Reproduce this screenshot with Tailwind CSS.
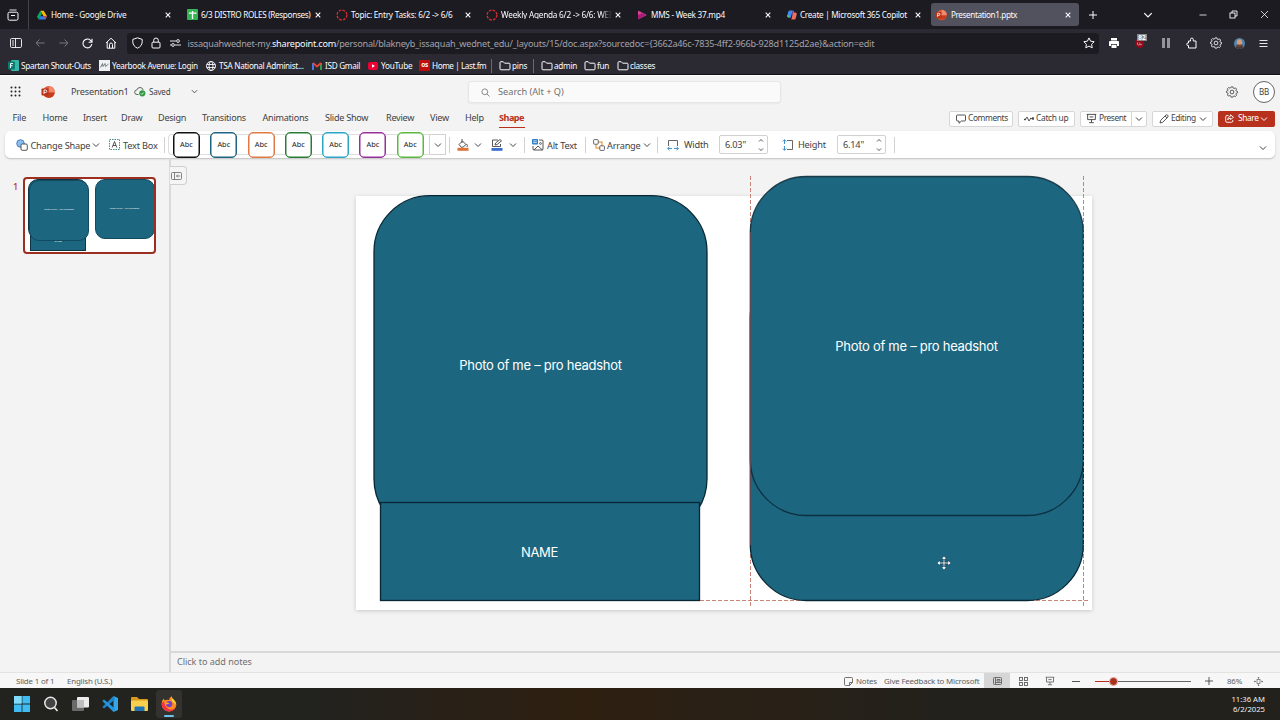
<!DOCTYPE html>
<html lang="en">
<head>
    <meta charset="UTF-8">
    <meta name="viewport" content="width=device-width, initial-scale=1.0">
    <title>Presentation1.pptx</title>
    <script src="https://cdn.jsdelivr.net/npm/@tailwindcss/browser@4"></script>
</head>
<body class="w-[1280px] h-[720px] overflow-hidden flex flex-col bg-[#f3f3f3] font-['Noto_Sans','Open_Sans',sans-serif] leading-none whitespace-nowrap">

    <!-- Shared icons -->
    <svg class="hidden">
        <symbol id="x" viewBox="0 0 8 8"><path d="M1.7 1.7l4.6 4.6M6.3 1.7L1.7 6.3" stroke="currentColor" stroke-width="1.1" fill="none"/></symbol>
        <symbol id="chev" viewBox="0 0 8 8"><path d="M1 2.5l3 3 3-3" stroke="currentColor" stroke-width="1" fill="none"/></symbol>
        <symbol id="folder" viewBox="0 0 12 12"><path d="M1 2.6q0-.9.9-.9h2.3l1.4 1.5h4.5q.9 0 .9.9v4.8q0 .9-.9.9H1.9q-.9 0-.9-.9z" stroke="currentColor" fill="none"/></symbol>
        <symbol id="ring" viewBox="0 0 12 12"><circle cx="6" cy="6" r="4.9" fill="none" stroke="#d8302f" stroke-width="1.3" stroke-dasharray="2.6 1.25"/></symbol>
        <symbol id="ppt" viewBox="0 0 14 14"><circle cx="7.8" cy="7" r="6" fill="#e2583a"/><path d="M7.8 1a6 6 0 0 1 6 6h-6z" fill="#f08a6c"/><path d="M2 8h11.7a6 6 0 0 1-11.7 0z" fill="#c43e1c"/><rect x="0.5" y="3.5" width="7" height="7" rx="0.8" fill="#b7341b"/><path d="M3 9V5h1.5a1.2 1.2 0 0 1 0 2.5H3" fill="none" stroke="#fff" stroke-width="0.9"/></symbol>
        <symbol id="gear" viewBox="0 0 14 14"><path d="M6 1h2l.5 1.500 1 .4 1.500-.7 1.300 1.400-.7 1.500.4.900 1.500.5v1.500l-1.500.5-.4 1 .7 1.500-1.300 1.300-1.500-.7-1 .4L8 13H6l-.5-1.500-1-.4-1.500.7-1.300-1.300.7-1.500-.4-1L.5 7.500V6l1.500-.5.4-.9-.7-1.500L3 1.800l1.500.7 1-.4z" fill="none" stroke="currentColor" stroke-linejoin="round"/><circle cx="7" cy="7" r="2.200" fill="none" stroke="currentColor"/></symbol>
        <symbol id="screen" viewBox="0 0 12 12"><path d="M.8 1.500h10.400M1.800 1.500v5.700h8.400V1.500M6 7.200v3M3.500 10.500h5M4 4.300h4" fill="none" stroke="currentColor"/></symbol>
        <symbol id="spin" viewBox="0 0 8 16"><path d="M2 4.500l2-2 2 2M2 11.500l2 2 2-2" fill="none" stroke="currentColor" stroke-width="0.9"/></symbol>
    </svg>

    <!-- Tab strip -->
    <div class="h-[29px] shrink-0 bg-[#1c1b22] flex items-center text-[#fbfbfe] text-[8.2px] tracking-[-0.26px]">
        <div class="w-[29px] h-full border-r border-[#45444c] flex items-center pl-[7px]">
            <svg class="size-3" viewBox="0 0 12 12" fill="none" stroke="currentColor"><path d="M2.500 1h7" stroke-width="0.9"/><rect x="1" y="3.200" width="10" height="8" rx="1.500"/><path d="M4 6.500h4"/></svg>
        </div>
        <div class="w-[150px] flex items-center pl-2">
            <svg class="w-[10px] h-[10px]" viewBox="0 0 12 12"><path d="M4 1h4l4 6.500H8z" fill="#ffba00"/><path d="M4 1l2 3.500L2 11.500 0 8z" fill="#0da960"/><path d="M2 11.500l2-4h8l-2 4z" fill="#2f7ef0"/><path d="M10 11.500l2-4H8z" fill="#ea4335"/></svg>
            <span class="ml-1 pt-px w-[112px]">Home - Google Drive</span><svg class="size-2 ml-[1px]"><use href="#x"/></svg>
        </div>
        <div class="w-[150px] flex items-center pl-2">
            <svg class="w-[11px] h-[11px]" viewBox="0 0 11 11"><rect width="11" height="11" rx="1" fill="#34b455"/><path d="M5.500 2v8M2 4.200h7.500" stroke="#fff" stroke-width="1.300"/></svg>
            <span class="ml-[3px] pt-px w-[111px] tracking-[-0.34px]">6/3 DISTRO ROLES (Responses)</span><svg class="size-2 ml-[2px]"><use href="#x"/></svg>
        </div>
        <div class="w-[150px] flex items-center pl-[7px]">
            <svg class="size-3"><use href="#ring"/></svg>
            <span class="ml-[3px] pt-px w-[111px] tracking-[-0.22px]">Topic: Entry Tasks: 6/2 -&gt; 6/6</span><svg class="size-2 ml-[2px]"><use href="#x"/></svg>
        </div>
        <div class="w-[150px] flex items-center pl-[7px]">
            <svg class="size-3"><use href="#ring"/></svg>
            <span class="ml-[3px] pt-px w-[111px] mask-r-from-90% tracking-[-0.22px]">Weekly Agenda 6/2 -&gt; 6/6: WEE</span><svg class="size-2 ml-[2px]"><use href="#x"/></svg>
        </div>
        <div class="w-[150px] flex items-center pl-2">
            <svg class="w-[10px] h-[10px]" viewBox="0 0 10 10"><path d="M1 1.500q0-1 1-.6l7 3.500q.9.600 0 1.200l-7 3.500q-1 .4-1-.6z" fill="#e0409a"/><path d="M1 5l4-2 4 2-7 4q-1 .4-1-.6z" fill="#a91c78"/></svg>
            <span class="ml-1 pt-px w-[111px]">MMS - Week 37.mp4</span><svg class="size-2 ml-[2px]"><use href="#x"/></svg>
        </div>
        <div class="w-[150px] flex items-center pl-[8px]">
            <svg class="w-[10px] h-[10px]" viewBox="0 0 10 10"><path d="M2.500.5h3.200L3.800 7.500H1.500Q0 7.500.3 5.500L1.200 2Q1.500.5 2.500.5z" fill="#3a8df0"/><path d="M1 4.500l2 3H1.500Q0 7.500.3 5.500z" fill="#5ec26a"/><path d="M7.500 9.500H4.300L6.200 2.500h2.300Q10 2.500 9.700 4.500L8.800 8Q8.500 9.500 7.500 9.500z" fill="#ef6f5a"/><path d="M5.700.5Q7 .5 7.300 2.500H6.200L4.900 7z" fill="#b35be0"/></svg>
            <span class="ml-[3px] pt-px w-[112px] tracking-[-0.3px]">Create | Microsoft 365 Copilot</span><svg class="size-2 ml-[2px]"><use href="#x"/></svg>
        </div>
        <div class="ml-[2px] w-[148px] h-[23px] rounded-[3px] bg-[#52525e] flex items-center pl-[4px]">
            <svg class="size-3"><use href="#ppt"/></svg>
            <span class="ml-1 pt-px w-[111px] tracking-[-0.4px]">Presentation1.pptx</span><svg class="size-2 ml-[2px]"><use href="#x"/></svg>
        </div>
        <svg class="size-[10px] ml-[9px]" viewBox="0 0 10 10"><path d="M5 1v8M1 5h8" stroke="currentColor"/></svg>
        <svg class="size-[10px] ml-[45px]"><use href="#chev"/></svg>
        <svg class="size-[8px] ml-[46px]" viewBox="0 0 8 8"><path d="M.5 4h7" stroke="currentColor" stroke-width="0.8"/></svg>
        <svg class="size-[9px] ml-[22px]" viewBox="0 0 9 9" fill="none" stroke="currentColor" stroke-width="0.9"><rect x="1" y="3" width="5" height="5"/><path d="M3 3V1h5v5H6"/></svg>
        <svg class="size-[9px] ml-[22px]" viewBox="0 0 9 9"><path d="M1 1l7 7M8 1L1 8" stroke="currentColor" stroke-width="0.8"/></svg>
    </div>

    <!-- Address bar -->
    <div class="h-[27px] pt-px shrink-0 bg-[#2b2a33] flex items-center text-[#fbfbfe]">
        <svg class="w-3 h-[10px] ml-[10px]" viewBox="0 0 12 10" fill="none" stroke="currentColor" stroke-width="0.9"><rect x="0.500" y="0.500" width="11" height="9" rx="1.200"/><path d="M5.500.5v9M2 3h2M2 5h2M2 7h2"/></svg>
        <svg class="size-[10px] ml-[13px] text-[#77767f]" viewBox="0 0 10 10" fill="none" stroke="currentColor"><path d="M9.500 5H1M4.500 1.500L1 5l3.500 3.500"/></svg>
        <svg class="size-[10px] ml-[14px] text-[#77767f]" viewBox="0 0 10 10" fill="none" stroke="currentColor"><path d="M.5 5H9M5.500 1.500L9 5 5.500 8.500"/></svg>
        <svg class="size-[11px] ml-[13px]" viewBox="0 0 11 11" fill="none" stroke="currentColor" stroke-width="1.100"><path d="M9.800 6A4.400 4.400 0 1 1 8.500 2.300L9.800 3.800M10 .8v3.400H6.600"/></svg>
        <svg class="size-[12px] ml-[12px]" viewBox="0 0 12 12" fill="none" stroke="currentColor"><path d="M1 6l5-4.800L11 6M2.200 5v6.200h7.600V5M4.500 11V7.500a1.500 1.500 0 0 1 3 0V11"/></svg>
        <div class="ml-[10px] w-[972px] h-[21px] bg-[#1c1b22] rounded-[3px] flex items-center">
            <svg class="w-[11px] h-3 ml-[5px]" viewBox="0 0 11 12" fill="none" stroke="currentColor"><path d="M5.500.8l4.700 1.600v2.400c0 3-1.700 5-4.700 6.400C2.500 9.800.8 7.800.8 4.800V2.400z"/></svg>
            <svg class="w-[10px] h-3 ml-2" viewBox="0 0 10 12" fill="none" stroke="currentColor"><rect x="1" y="5.200" width="8" height="5.800" rx="1"/><path d="M2.700 5V3.300a2.300 2.300 0 0 1 4.600 0V5"/></svg>
            <svg class="w-[11px] h-[8px] ml-[9px]" viewBox="0 0 11 8" fill="none" stroke="currentColor" stroke-width="0.9"><path d="M0 2h6M5 6h6M0 6h1"/><circle cx="8" cy="2" r="1.400"/><circle cx="3" cy="6" r="1.400"/></svg>
            <span class="ml-[6.500px] pt-px w-[889.500px] text-[9.100px] tracking-[-0.205px] text-[#a3a3ab]">issaquahwednet-my.<span class="text-[#fbfbfe]">sharepoint.com</span>/personal/blakneyb_issaquah_wednet_edu/_layouts/15/doc.aspx?sourcedoc={3662a46c-7835-4ff2-966b-928d1125d2ae}&amp;action=edit</span>
            <svg class="size-[12px] ml-[6px]" viewBox="0 0 12 12" fill="none" stroke="currentColor" stroke-linejoin="round"><path d="M6 .9l1.600 3.300 3.600.5-2.600 2.500.6 3.600L6 9.100l-3.200 1.700.6-3.600L.8 4.700l3.600-.5z"/></svg>
        </div>
        <svg class="size-[12px] ml-[9px]" viewBox="0 0 12 12"><path d="M3 1h6v2.500H3zM1 5q0-1 1-1h8q1 0 1 1v4H9V7H3v2H1zM3.500 7.800h5V11h-5z" fill="#fff"/></svg>
        <div class="relative ml-[14px] w-[13px] h-3">
            <svg class="size-[12px]" viewBox="0 0 12 12"><path d="M6 1.500l4 2V8q-1 3-4 3.500Q3 11 1.500 8V3z" fill="#8e0a18"/><path d="M3.500 5.500v2q1.200 1.200 2.400 0v-2M5.900 7.500q1.500 1 2.200-.5" stroke="#e8b8bc" stroke-width="0.700" fill="none"/></svg>
            <span class="absolute left-[3px] -top-[3px] w-[10px] h-[7px] bg-[#8a8a8a] text-white text-[6.500px] leading-[7px] text-center font-bold">82</span>
        </div>
        <svg class="size-[10px] ml-[14px]" viewBox="0 0 10 10"><path d="M1 0h3v10H1zM6 0h3v10H6z" fill="#94949a"/></svg>
        <svg class="size-[12px] ml-[15px]" viewBox="0 0 12 12" fill="none" stroke="currentColor"><path d="M2.500 4h2V2.500a1.400 1.400 0 0 1 2.800 0V4H10v7H2.500V8.500H2A1.200 1.200 0 0 1 2 6h.5z"/></svg>
        <svg class="size-[12px] ml-[12px]"><use href="#gear"/></svg>
        <svg class="size-[11px] ml-[12px]" viewBox="0 0 11 11"><circle cx="5.500" cy="5.500" r="5.500" fill="#4b86a8"/><path d="M2 9.500q3.500 3 7 0L8.500 7h-6z" fill="#4a3530"/><ellipse cx="5.500" cy="4.800" rx="2.700" ry="3.600" fill="#d69a80"/><path d="M3 6q2.500 1.500 5 0Q7.500 9 5.500 9T3 6z" fill="#70402e"/></svg>
        <svg class="size-[9px] ml-[14px]" viewBox="0 0 9 9"><path d="M.5 1.500h8M.5 4.500h8M.5 7.500h8" stroke="currentColor" stroke-width="0.9"/></svg>
    </div>

    <!-- Bookmarks -->
    <div class="h-[19px] pt-px shrink-0 bg-[#2b2a33] border-b border-[#111116] flex items-center text-[#fbfbfe] text-[8.2px] tracking-[-0.26px]">
        <svg class="size-[11px] ml-2" viewBox="0 0 11 11"><rect x="3" width="8" height="11" rx="1" fill="#35b8a8"/><rect y="1.500" width="7" height="8" rx="1" fill="#0b7a70"/><path d="M2.500 8V3.500H5M2.500 5.700h2" stroke="#fff" stroke-width="0.9" fill="none"/></svg>
        <span class="ml-[2px] pt-px w-[78px] tracking-[-0.32px]">Spartan Shout-Outs</span>
        <svg class="size-[11px]" viewBox="0 0 11 11"><rect width="11" height="11" fill="#eef0f2"/><path d="M1.500 7.500l2-4 .5 3 2-3 .5 3 3-2.500" stroke="#68727c" fill="none" stroke-width="0.9"/></svg>
        <span class="ml-[2px] pt-px w-[93px] tracking-[-0.32px]">Yearbook Avenue: Login</span>
        <svg class="size-[10px] ml-[1px]" viewBox="0 0 10 10" fill="none" stroke="currentColor" stroke-width="0.9"><circle cx="5" cy="5" r="4.500"/><ellipse cx="5" cy="5" rx="2" ry="4.500"/><path d="M.8 3.500h8.400M.8 6.500h8.400"/></svg>
        <span class="ml-[3px] pt-px w-[93px] tracking-[-0.3px]">TSA National Administ...</span>
        <svg class="w-[10px] h-2" viewBox="0 0 10 8"><path d="M1 8V1" stroke="#4285f4" stroke-width="1.800"/><path d="M9 8V1" stroke="#34a853" stroke-width="1.800"/><path d="M1 1l4 3.500L9 1" stroke="#ea4335" stroke-width="1.800" fill="none"/></svg>
        <span class="ml-[3px] pt-px w-[43px] tracking-[-0.3px]">ISD Gmail</span>
        <svg class="w-[10px] h-2" viewBox="0 0 10 8"><rect width="10" height="8" rx="2" fill="#f00033"/><path d="M4 2.300v3.400L7 4z" fill="#fff"/></svg>
        <span class="ml-[3px] pt-px w-[38px]">YouTube</span>
        <span class="w-[11px] h-[11px] rounded-[1px] bg-[#c00d0d] text-[6.500px] leading-[10px] font-bold text-center tracking-[-0.3px]">os</span>
        <span class="ml-[2px] pt-px w-[59px] tracking-[-0.44px]">Home | Last.fm</span>
        <span class="w-px h-[14px] bg-[#6a6973]"></span>
        <svg class="size-3 ml-[7px]"><use href="#folder"/></svg>
        <span class="ml-[1px] pt-px w-[21px]">pins</span>
        <span class="w-px h-[14px] bg-[#6a6973]"></span>
        <svg class="size-3 ml-[7px]"><use href="#folder"/></svg>
        <span class="ml-[1px] pt-px w-[30px]">admin</span>
        <svg class="size-3"><use href="#folder"/></svg>
        <span class="ml-[1px] pt-px w-[20px]">fun</span>
        <svg class="size-3"><use href="#folder"/></svg>
        <span class="ml-[1px] pt-px">classes</span>
    </div>

    <!-- App header -->
    <div class="h-[32px] shrink-0 border-t border-white flex items-center text-[#424242] tracking-[-0.2px]">
        <svg class="size-[11px] ml-[10px]" viewBox="0 0 11 11" fill="#222"><circle cx="1.500" cy="1.500" r="1"/><circle cx="5.500" cy="1.500" r="1"/><circle cx="9.500" cy="1.500" r="1"/><circle cx="1.500" cy="5.500" r="1"/><circle cx="5.500" cy="5.500" r="1"/><circle cx="9.500" cy="5.500" r="1"/><circle cx="1.500" cy="9.500" r="1"/><circle cx="5.500" cy="9.500" r="1"/><circle cx="9.500" cy="9.500" r="1"/></svg>
        <svg class="size-[14px] ml-[20px]"><use href="#ppt"/></svg>
        <span class="ml-4 pt-px w-[63px] text-[9.200px]">Presentation1</span>
        <svg class="w-[12px] h-[11px]" viewBox="0 0 12 11" fill="none"><path d="M4.500 8.500H3A2.200 2.200 0 0 1 2.800 4 3.300 3.300 0 0 1 9.200 4" stroke="#4b5a50" stroke-width="0.9"/><circle cx="8.300" cy="7.300" r="3.100" fill="#2f9a41"/><path d="M6.900 7.400l1 1 1.800-1.900" stroke="#fff" stroke-width="0.800"/></svg>
        <span class="ml-[3px] pt-px w-[41px] text-[8px]">Saved</span>
        <svg class="size-[7px] ml-[0.500px]"><use href="#chev"/></svg>
        <div class="ml-[270.500px] w-[313px] h-[22px] mt-px bg-[#fafafa] border border-[#e6e6e6] rounded-[3px] flex items-center text-[#707070] text-[9.200px] shadow-xs">
            <svg class="size-[9px] ml-[12px]" viewBox="0 0 9 9" fill="none" stroke="currentColor" stroke-width="0.800"><circle cx="3.800" cy="3.800" r="2.900"/><path d="M6 6l2.500 2.500"/></svg>
            <span class="ml-[8px] tracking-[0]">Search (Alt + Q)</span>
        </div>
        <svg class="size-[12px] ml-[445px]"><use href="#gear"/></svg>
        <span class="ml-[15px] size-[22px] rounded-full border border-[#666] bg-white text-[8px] flex items-center justify-center">BB</span>
    </div>

    <!-- Ribbon tabs -->
    <div class="h-[24px] pb-[2px] shrink-0 flex items-center pl-[12.500px] pr-[5px] text-[9.100px] tracking-[-0.26px] text-[#424242]">
        <span class="w-[30px]">File</span>
        <span class="w-[40.500px]">Home</span>
        <span class="w-[38px]">Insert</span>
        <span class="w-[37px]">Draw</span>
        <span class="w-[44px]">Design</span>
        <span class="w-[60.500px]">Transitions</span>
        <span class="w-[62.500px]">Animations</span>
        <span class="w-[61px]">Slide Show</span>
        <span class="w-[44px]">Review</span>
        <span class="w-[35px]">View</span>
        <span class="w-[34px]">Help</span>
        <span class="w-[26px] h-[18px] mt-px leading-[16px] border-b border-[#b7311c] text-[#b7311c] font-bold tracking-[-0.5px]">Shape</span>
        <div class="ml-auto mt-px flex gap-[5px] text-[8.400px] tracking-[-0.2px]">
            <div class="w-[64px] h-4 bg-white border border-[#d6d6d6] rounded-[2px] flex items-center pl-[6px]">
                <svg class="size-[10px]" viewBox="0 0 10 10" fill="none" stroke="currentColor" stroke-width="0.9"><path d="M1.500 1h7q1 0 1 1v4q0 1-1 1H5.500L3 9.300V7H1.500q-1 0-1-1V2q0-1 1-1z"/></svg>
                <span class="ml-[2px] tracking-[-0.4px]">Comments</span>
            </div>
            <div class="w-[57px] h-4 bg-white border border-[#d6d6d6] rounded-[2px] flex items-center pl-[5px]">
                <svg class="w-[10px] h-[8px]" viewBox="0 0 10 8" fill="none" stroke="currentColor" stroke-width="0.9"><path d="M0 4.500h1.200L3 2l2 4 1.800-3 1.200 1"/><circle cx="9" cy="3.500" r="0.900" fill="currentColor"/><circle cx="1" cy="4.500" r="0.600" fill="currentColor"/></svg>
                <span class="ml-[2px] tracking-[-0.3px]">Catch up</span>
            </div>
            <div class="w-[67px] h-4 bg-white border border-[#d6d6d6] rounded-[2px] flex items-center pl-[5px]">
                <svg class="size-[11px]"><use href="#screen" width="11" height="11"/></svg>
                <span class="ml-[2px] w-[32px] tracking-[-0.42px]">Present</span>
                <span class="w-px h-full bg-[#d6d6d6]"></span>
                <svg class="size-[8px] ml-[3px]"><use href="#chev"/></svg>
            </div>
            <div class="w-[61px] h-4 bg-white border border-[#d6d6d6] rounded-[2px] flex items-center pl-[6px]">
                <svg class="size-[10px]" viewBox="0 0 10 10" fill="none" stroke="currentColor" stroke-width="0.9"><path d="M1 9l.7-2.700L7 1q.8-.7 1.600.1T8.900 3L3.700 8.300zM6 2l2 2"/></svg>
                <span class="ml-[2px] w-[28px] tracking-[-0.4px]">Editing</span>
                <svg class="size-[8px]"><use href="#chev"/></svg>
            </div>
            <div class="w-[57px] h-4 bg-[#b7311c] text-white rounded-[2px] flex items-center pl-[7px]">
                <svg class="size-[9px]" viewBox="0 0 9 9" fill="none" stroke="currentColor" stroke-width="0.9"><path d="M3.500 1.500H2q-1.300 0-1.300 1.300V7q0 1.300 1.300 1.300h4.500q1.300 0 1.300-1.300V6M5.500.8l3 2.500-3 2.300V4.200Q3.500 4.200 2.600 6 2.800 2.500 5.500 2.200z"/></svg>
                <span class="ml-[4px] w-[22px] tracking-[-0.4px]">Share</span>
                <svg class="size-[8px]"><use href="#chev"/></svg>
            </div>
        </div>
    </div>

    <!-- Ribbon -->
    <div class="h-[27px] mx-[5px] shrink-0 bg-white rounded-[5px] shadow-[0_1px_2px_rgba(0,0,0,0.22)] flex items-center text-[9.200px] tracking-[-0.2px] text-[#424242]">
        <svg class="size-[12px] ml-[10.500px]" viewBox="0 0 12 12"><circle cx="4.500" cy="4.500" r="3.800" fill="#8bbcf0" stroke="#2f6fb0" stroke-width="0.800"/><rect x="5" y="5" width="6.300" height="6.300" rx="1.200" fill="#fff" stroke="#424242" stroke-width="0.9"/></svg>
        <span class="ml-[3px] pt-[2px] w-[61.500px]">Change Shape</span>
        <svg class="size-[8px]"><use href="#chev"/></svg>
        <svg class="size-[11px] ml-[9px]" viewBox="0 0 11 11" fill="none"><rect x="0.500" y="0.500" width="10" height="10" stroke="#3b8f8d" stroke-dasharray="1.500 1"/><path d="M3.200 8.500L5.500 2.500l2.300 6M4 6.500h3" stroke="#424242" stroke-width="0.9"/></svg>
        <span class="ml-[3px] pt-[2px] w-[41px]">Text Box</span>
        <span class="w-px h-4 bg-[#d1d1d1]"></span>
        <div class="ml-[3px] w-[262px] h-[27px] flex items-center relative">
            <span class="absolute inset-x-0 top-[3px] h-[21px] border-y border-l border-[#dedede] rounded-l-[4px]"></span>
            <div class="relative ml-[5px] flex gap-[10.300px] text-[7.400px] tracking-[0] text-[#222]">
                <span class="w-[27px] h-[26px] bg-white border-[1.500px] border-[#111] rounded-[5px] text-center leading-[22px] inset-ring-[0.500px] inset-ring-[#111]">Abc</span>
                <span class="w-[27px] h-[26px] bg-white border-[1.500px] border-[#1d6580] rounded-[5px] text-center leading-[22px] inset-ring-[0.500px] inset-ring-[#1d6580]">Abc</span>
                <span class="w-[27px] h-[26px] bg-white border-[1.500px] border-[#e07a45] rounded-[5px] text-center leading-[22px] inset-ring-[0.500px] inset-ring-[#e07a45]">Abc</span>
                <span class="w-[27px] h-[26px] bg-white border-[1.500px] border-[#2a7c34] rounded-[5px] text-center leading-[22px] inset-ring-[0.500px] inset-ring-[#2a7c34]">Abc</span>
                <span class="w-[27px] h-[26px] bg-white border-[1.500px] border-[#2ba5c6] rounded-[5px] text-center leading-[22px] inset-ring-[0.500px] inset-ring-[#2ba5c6]">Abc</span>
                <span class="w-[27px] h-[26px] bg-white border-[1.500px] border-[#97309a] rounded-[5px] text-center leading-[22px] inset-ring-[0.500px] inset-ring-[#97309a]">Abc</span>
                <span class="w-[27px] h-[26px] bg-white border-[1.500px] border-[#5cb840] rounded-[5px] text-center leading-[22px] inset-ring-[0.500px] inset-ring-[#5cb840]">Abc</span>
            </div>
        </div>
        <span class="w-[17px] h-[21px] border border-[#d1d1d1] bg-white flex items-center justify-center -ml-[1px]"><svg class="size-[8px]"><use href="#chev"/></svg></span>
        <span class="ml-[3px] w-px h-4 bg-[#d1d1d1]"></span>
        <svg class="size-[12px] ml-[7px]" viewBox="0 0 12 12" fill="none"><path d="M2 5.500L5.500 2l3.500 3.500-3 2.700H4.200zM5 0v4M9.500 5q1.500 1.500.5 3" stroke="#424242" stroke-width="0.9"/><rect x="0.500" y="8.800" width="11" height="3" fill="#e0733a"/></svg>
        <svg class="size-[8px] ml-[5px]"><use href="#chev"/></svg>
        <svg class="size-[12px] ml-[9px]" viewBox="0 0 12 12" fill="none"><path d="M7 1H1.500v6.500h8V5M4 6l.6-2L9 .5l1.500 1.300L6 5.600z" stroke="#424242" stroke-width="0.9"/><rect x="0.500" y="9" width="11" height="2.800" fill="#3a6fd0"/></svg>
        <svg class="size-[8px] ml-[6px]"><use href="#chev"/></svg>
        <span class="ml-[7px] w-px h-4 bg-[#d1d1d1]"></span>
        <svg class="size-[12px] ml-[7px]" viewBox="0 0 12 12" fill="none"><path d="M7 1h3q1 0 1 1v8q0 1-1 1H2q-1 0-1-1V7M2 11l4-4 4.500 4" stroke="#424242" stroke-width="0.9"/><rect x="0" y="0" width="6" height="5.500" rx="0.800" fill="#2f80c8"/><path d="M1.200 1.900h3.600M1.200 3.600h3.600" stroke="#fff" stroke-width="0.700"/><circle cx="8.500" cy="4.500" r="0.900" stroke="#424242" stroke-width="0.800"/></svg>
        <span class="ml-[3px] pt-[2px] w-[38px]">Alt Text</span>
        <span class="w-px h-4 bg-[#d1d1d1]"></span>
        <svg class="size-[12px] ml-[7px]" viewBox="0 0 12 12" fill="#fff"><rect x="3" y="3" width="6" height="6" stroke="#e8912d" stroke-width="1.100"/><rect x="0.600" y="0.600" width="4.600" height="4.600" rx="0.700" stroke="#555" stroke-width="0.9"/><rect x="6.800" y="6.800" width="4.600" height="4.600" rx="0.700" stroke="#555" stroke-width="0.9"/></svg>
        <span class="ml-[2px] pt-[2px] w-[36px]">Arrange</span>
        <svg class="size-[8px]"><use href="#chev"/></svg>
        <span class="ml-[6px] w-px h-4 bg-[#d1d1d1]"></span>
        <svg class="size-[12px] ml-[9px]" viewBox="0 0 12 12" fill="none"><path d="M1.500 7V1.500h9V7" stroke="#555" stroke-width="0.9"/><path d="M5 9.500H.8M2.500 7.700L.7 9.500l1.800 1.800M7 9.500h4.200M9.500 7.700l1.800 1.800-1.800 1.800" stroke="#2b88c8" stroke-width="0.9"/></svg>
        <span class="ml-[5px] pt-px w-[35px]">Width</span>
        <div class="w-[49px] h-[19px] border border-[#d1d1d1] rounded-[2px] flex items-center pl-[5px]"><span class="pt-px w-[32px]">6.03"</span><svg class="w-[8px] h-4"><use href="#spin"/></svg></div>
        <svg class="size-[12px] ml-[14px]" viewBox="0 0 12 12" fill="none"><path d="M5 1.500h5.500v9H5" stroke="#555" stroke-width="0.9"/><path d="M2.500 5V.8M.7 2.500L2.500.7l1.800 1.800M2.500 7v4.200M.7 9.500l1.800 1.800 1.800-1.800" stroke="#2b88c8" stroke-width="0.9"/></svg>
        <span class="ml-[4px] pt-px w-[39px]">Height</span>
        <div class="w-[49px] h-[19px] border border-[#d1d1d1] rounded-[2px] flex items-center pl-[5px]"><span class="pt-px w-[32px]">6.14"</span><svg class="w-[8px] h-4"><use href="#spin"/></svg></div>
        <span class="ml-[8px] w-px h-4 bg-[#d1d1d1]"></span>
        <svg class="size-[8px] ml-auto mr-[8px] mt-[6px]"><use href="#chev"/></svg>
    </div>

    <!-- Workspace -->
    <div class="flex-1 min-h-0 flex">
        <!-- Slide list -->
        <div class="w-[171px] shrink-0 border-r-2 border-[#d9d9d9] flex items-start pt-[19px]">
            <span class="ml-[13px] w-[10px] mt-[5px] text-[9.200px] font-medium text-[#b7311c]">1</span>
            <div class="relative w-[133px] h-[77px] border-2 border-[#9c2f20] rounded-[4px] bg-white overflow-hidden text-white font-['Liberation_Sans',Arial,sans-serif]">
                <div class="absolute left-[5px] top-[50px] w-[56px] h-[22px] bg-[#1d6680] border border-[#0b3445] text-center text-[2.500px] pt-[11px]">NAME</div>
                <div class="absolute left-[3px] top-[0px] w-[60px] h-[60px] rounded-[10px] bg-[#1d6680] border border-[#0b3445]"></div>
                <div class="absolute left-[4px] top-[1px] w-[60px] h-[61px] rounded-[10px] bg-[#1d6680] border border-[#124a60] flex items-center justify-center text-[2.400px]">Photo of me – pro headshot</div>
                <div class="absolute left-[69.500px] top-[0px] w-[60px] h-[60px] rounded-[10px] bg-[#1d6680] border border-[#124a60] flex items-center justify-center text-[2.400px]">Photo of me – pro headshot</div>
            </div>
        </div>

        <div class="flex-1 flex flex-col">
            <!-- Slide canvas -->
            <div class="relative flex-1 font-['Inter','Liberation_Sans',Arial,sans-serif] text-[13px] tracking-[-0.28px] text-white">
                <div class="absolute -left-[1px] top-[8px] w-[17px] h-[19px] bg-[#f5f5f5] border border-l-0 border-[#cfcfcf] rounded-r-[4px] flex items-center pl-[1px]">
                    <svg class="w-[11px] h-[8px]" viewBox="0 0 11 8" fill="none" stroke="#666" stroke-width="0.800"><rect x="0.500" y="0.500" width="10" height="7" rx="1"/><path d="M3.500.5v7M9 4H5.500M6.800 2.700L5.500 4l1.300 1.300"/></svg>
                </div>
                <div class="absolute left-[185px] top-[38px] w-[736px] h-[414px] bg-white shadow-[0_1px_4px_rgba(0,0,0,0.18)]"></div>
                <!-- Shapes and smart guides -->
                <svg class="absolute left-0 top-0 w-[1109px] h-[490px]" fill="#1d6680" stroke="#082735" stroke-width="1.300">
                    <path d="M579.500 18v430M912.500 18v430M529 442.500h389" fill="none" stroke="#c0705f" stroke-width="1" stroke-dasharray="4 2" opacity="0.850"/>
                    <rect x="203" y="37.700" width="333" height="339" rx="56"/>
                    <rect x="209.500" y="344.500" width="319" height="98"/>
                    <rect x="579.300" y="103.500" width="333" height="339" rx="56"/>
                    <rect x="579.300" y="18.500" width="333" height="339" rx="56" stroke-opacity="0.850"/>
                    <path d="M579.500 74v313" fill="none" stroke="#5b4a55" stroke-width="1"/>
                    <path d="M912.500 74v313" fill="none" stroke="#a06a66" stroke-width="1" stroke-dasharray="2 4"/>
                </svg>
                <div class="absolute left-[203px] top-[37px] w-[333px] h-[340px] flex items-center justify-center">Photo of me – pro headshot</div>
                <div class="absolute left-[209px] top-[345px] w-[319px] h-[99px] flex items-center justify-center">NAME</div>
                <div class="absolute left-[579px] top-[19px] w-[333px] h-[339px] flex items-center justify-center">Photo of me – pro headshot</div>
                <svg class="absolute left-[766px] top-[398px] w-[14px] h-[14px]" viewBox="0 0 14 14"><path d="M7 0l2.600 3H7.700v3.300H11V4.400L14 7l-3 2.600V7.700H7.700V11h1.900L7 14l-2.600-3h1.900V7.700H3v1.900L0 7l3-2.600v1.900h3.300V3H4.400z" fill="#fff" stroke="#0c2f45" stroke-width="0.500"/></svg>
            </div>
            <div class="h-[21px] shrink-0 border-t-2 border-[#d9d9d9] pl-[6px] pt-[4px] text-[9.100px] tracking-[-0.05px] text-[#707070]">Click to add notes</div>
        </div>
    </div>

    <!-- Status bar -->
    <div class="h-[16px] pt-px shrink-0 bg-[#f7f7f7] border-t border-[#e3e3e3] flex items-center text-[7.900px] tracking-[-0.18px] text-[#616161]">
        <span class="ml-4 pt-px w-[51px]">Slide 1 of 1</span>
        <span class="pt-px w-[777px]">English (U.S.)</span>
        <svg class="size-[9px]" viewBox="0 0 9 9" fill="none" stroke="currentColor" stroke-width="0.9"><path d="M1.500.5h6q1 0 1 1V5.500l-3 3h-4q-1 0-1-1v-6q0-1 1-1zM8.500 5.500h-3v3"/></svg>
        <span class="ml-[3px] pt-px w-[28px]">Notes</span>
        <span class="pt-px w-[100px]">Give Feedback to Microsoft</span>
        <span class="w-[26px] h-[15px] -mt-px bg-[#d6d6d6] flex items-center justify-center"><svg class="w-[9px] h-[8px]" viewBox="0 0 9 8" fill="none" stroke="currentColor" stroke-width="0.9"><rect x="0.500" y="0.500" width="8" height="7" rx="1"/><path d="M2.500 1v6M2.500 5.500h6M4 2.500h3v1.500H4z"/></svg></span>
        <svg class="size-[9px] ml-[9px]" viewBox="0 0 9 9" fill="none" stroke="currentColor" stroke-width="0.9"><rect x="0.500" y="0.500" width="3" height="3"/><rect x="5.500" y="0.500" width="3" height="3"/><rect x="0.500" y="5.500" width="3" height="3"/><rect x="5.500" y="5.500" width="3" height="3"/></svg>
        <svg class="size-[10px] ml-[17px]"><use href="#screen" width="10" height="10"/></svg>
        <span class="ml-[17px] w-[8px] h-px bg-[#555]"></span>
        <div class="ml-[15px] w-[96px] h-3 flex items-center">
            <span class="w-[14px] h-px bg-[#b7311c]"></span>
            <span class="size-[7px] rounded-full bg-[#a8301f] border border-[#e8b0a6] box-content"></span>
            <span class="flex-1 h-px bg-[#666]"></span>
        </div>
        <svg class="size-[8px] ml-[14px]" viewBox="0 0 8 8"><path d="M4 0v8M0 4h8" stroke="#444" stroke-width="0.9"/></svg>
        <span class="ml-[14px] pt-px w-[27px]">86%</span>
        <svg class="size-[9px]" viewBox="0 0 9 9" fill="none" stroke="currentColor" stroke-width="0.700"><rect x="3" y="2.500" width="3" height="4"/><path d="M4.500 0v2M3.700 1l.8-.8.800.8M4.500 7v2M3.700 8l.8.800.8-.8M0 4.500h2M1 3.700l-.8.800.8.800M7 4.500h2M8 3.700l.8.800-.8.800"/></svg>
    </div>

    <!-- Taskbar -->
    <div class="h-[32px] shrink-0 bg-linear-to-r from-[#22221e] from-25% via-[#2e1f10] via-45% to-[#22211c] to-75% flex items-center">
        <svg class="size-4 ml-[14px]" viewBox="0 0 16 16"><path d="M0 0h7.600v7.600H0zM8.400 0H16v7.600H8.400zM0 8.400h7.600V16H0zM8.400 8.400H16V16H8.400z" fill="#3fbdf2"/><path d="M0 0h7.600v7.600H0z" fill="#7fdcfb"/></svg>
        <svg class="size-4 ml-[13px]" viewBox="0 0 16 16" fill="none"><circle cx="7.500" cy="7" r="5.700" fill="#444" stroke="#e8e8e8" stroke-width="1.500"/><path d="M11.500 11.500l3 3.500" stroke="#e8e8e8" stroke-width="1.700"/></svg>
        <svg class="w-[17px] h-4 ml-[13px]" viewBox="0 0 17 16"><rect x="0" y="4" width="12" height="11" rx="1" fill="#6a6a6a"/><rect x="5" y="1" width="12" height="10.500" rx="1" fill="#ececec"/><rect x="5" y="4" width="7" height="7.500" fill="#bdbdbd"/></svg>
        <svg class="size-4 ml-[13px]" viewBox="0 0 16 16"><path d="M11.500 0L16 2v12l-4.500 2z" fill="#35a5ea"/><path d="M11.500 0L13 3.500 2 12.500.3 11z" fill="#1b86cc"/><path d="M11.500 16L13 12.500 2 3.500.3 5z" fill="#2296e0"/></svg>
        <svg class="w-[17px] h-4 ml-[13px]" viewBox="0 0 17 16"><path d="M0 2q0-1 1-1h5l2 2h8q1 0 1 1v3H0z" fill="#d9991c"/><rect y="4.500" width="17" height="10.500" rx="1" fill="#f9cf4f"/><path d="M3.500 15v-3.500q0-1 1-1h8q1 0 1 1V15z" fill="#1f74b8"/></svg>
        <div class="relative ml-[8px] w-[26px] h-[28px] rounded-[3px] bg-[#33322e] flex items-center justify-center">
            <svg class="size-4" viewBox="0 0 16 16"><path d="M8 15.500A7.400 7.400 0 0 1 .6 8Q.6 4.500 2.800 2.500q.2 1.200 1 1.800Q6 3.500 8 4 8.500 1.500 10.500.3q.3 2 2.500 3.700 2.500 2 2.400 4.500A7.300 7.300 0 0 1 8 15.500z" fill="#ff8a1f"/><path d="M10.500.3q.3 2 2.500 3.700 2 2 1.800 4.500L11 5z" fill="#ffd93d"/><path d="M.6 8q.6 7 7.400 7.500 4 0 6-3-5 2.500-8-.5T3 5.500Q1 6 .6 8z" fill="#f0304e"/><circle cx="8.200" cy="8" r="3.100" fill="#7b40c8"/><path d="M4 6.500q2.500-.5 4.500 1-1.500 1-3 .8z" fill="#ffb02e"/></svg>
            <span class="absolute bottom-[1px] left-[8px] w-[10px] h-[2px] rounded-full bg-[#69c3f2]"></span>
        </div>
        <div class="ml-auto mr-[15px] text-right text-[7.700px] leading-[10.500px] text-[#f0f0f0]">11:36 AM<br>6/2/2025</div>
    </div>
</body>
</html>
